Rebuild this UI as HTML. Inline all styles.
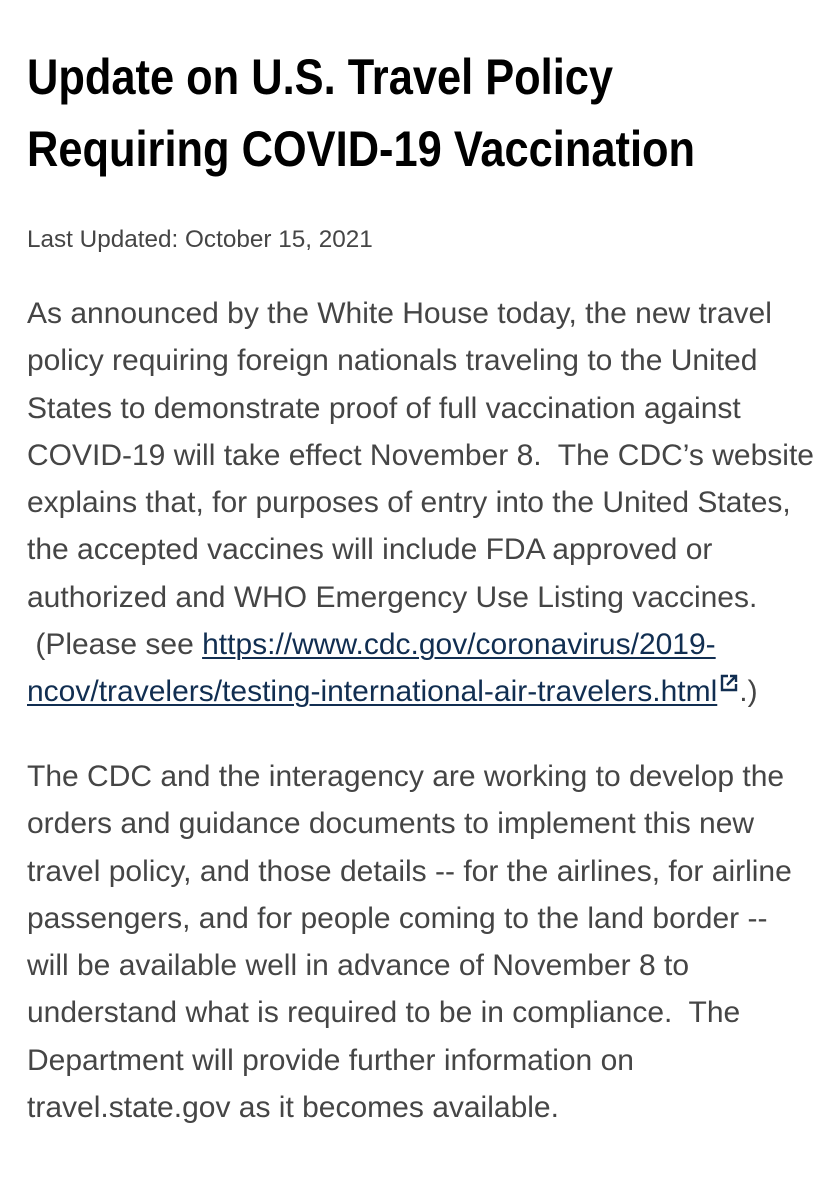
<!DOCTYPE html>
<html><head><meta charset="utf-8"><style>
html,body{margin:0;padding:0;background:#fff;}
body{width:836px;height:1200px;overflow:hidden;position:relative;font-family:"Liberation Sans",sans-serif;}
.t{position:absolute;left:27px;font-weight:bold;font-size:50px;color:#000;white-space:nowrap;line-height:72px;transform:scaleX(0.868);transform-origin:0 0;}
.l{position:absolute;left:27px;white-space:nowrap;color:#454545;font-size:30px;line-height:47.3px;}
.d{position:absolute;left:27px;white-space:nowrap;color:#454545;font-size:24.3px;}
a{color:#112e51;text-decoration:underline;text-decoration-thickness:2px;text-underline-offset:3px;}
</style></head><body>
<div class="t" style="top:41px">Update on U.S. Travel Policy<br>Requiring COVID-19 Vaccination</div>
<div class="d" style="top:226px">Last Updated: October 15, 2021</div>
<div class="l" style="top:290px">As announced by the White House today, the new travel<br>policy requiring foreign nationals traveling to the United<br>States to demonstrate proof of full vaccination against<br>COVID-19 will take effect November 8.&nbsp; The CDC’s website<br>explains that, for purposes of entry into the United States,<br>the accepted vaccines will include FDA approved or<br>authorized and WHO Emergency Use Listing vaccines.<br>&nbsp;(Please see <a>https://www.cdc.gov/coronavirus/2019-</a><br><a>ncov/travelers/testing-international-air-travelers.html</a><svg width="20" height="20" viewBox="0 0 20 20" style="vertical-align:8px;margin-left:2px"><path d="M9 3H3v14h14v-6" fill="none" stroke="#112e51" stroke-width="2.4"/><path d="M8 12L17 3M11 3h6v6" fill="none" stroke="#112e51" stroke-width="2.4"/></svg>.)</div>
<div class="l" style="top:753px">The CDC and the interagency are working to develop the<br>orders and guidance documents to implement this new<br>travel policy, and those details -- for the airlines, for airline<br>passengers, and for people coming to the land border --<br>will be available well in advance of November 8 to<br>understand what is required to be in compliance.&nbsp; The<br>Department will provide further information on<br>travel.state.gov as it becomes available.</div>
</body></html>
